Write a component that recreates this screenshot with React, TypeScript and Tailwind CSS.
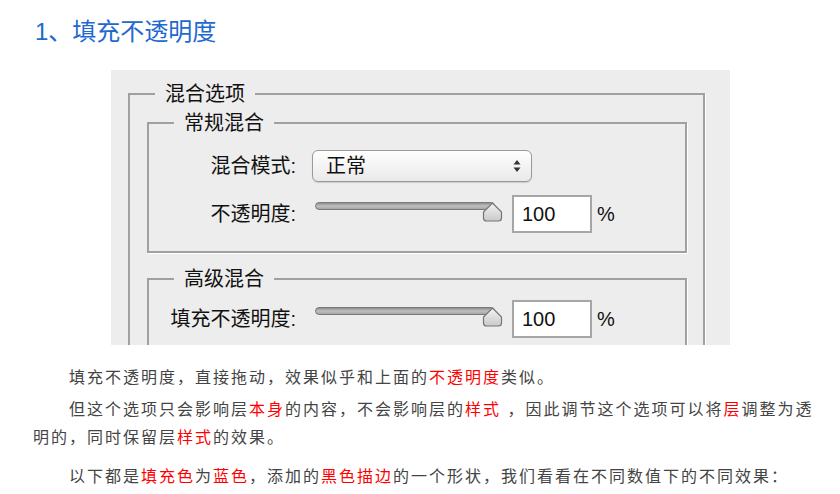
const cjk = '"Liberation Sans", "Noto Sans CJK SC", sans-serif';

function Slider() {
  return (
    <div className="relative w-[188px] h-[38px]">
      <div className="absolute left-0 top-[7px] w-[180px] h-[8px] rounded-full border border-[#7a7a7a] bg-gradient-to-b from-[#8e8e8e] via-[#c0c0c0] to-[#a4a4a4]" />
      <svg
        className="absolute left-[167px] top-[7px]"
        width="21"
        height="20"
        viewBox="0 0 21 20"
      >
        <defs>
          <linearGradient id="thumb" x1="0" y1="0" x2="0" y2="1">
            <stop offset="0" stopColor="#f4f4f4" />
            <stop offset="1" stopColor="#c9c9c9" />
          </linearGradient>
        </defs>
        <path
          d="M10.5 1 L19.5 10 L19.5 16 Q19.5 19 16.5 19 L4.5 19 Q1.5 19 1.5 16 L1.5 10 Z"
          fill="url(#thumb)"
          stroke="#777"
          strokeWidth="1.2"
        />
      </svg>
    </div>
  );
}

function PercentInput() {
  return (
    <div className="flex items-center gap-[5px]">
      <div className="w-[80px] h-[38px] bg-white border-2 border-[#a6a6a6] flex items-center pl-[8px] text-[20px] text-[#111]">
        100
      </div>
      <span className="text-[20px] text-[#111]">%</span>
    </div>
  );
}

function Legend({ children }: { children: React.ReactNode }) {
  return (
    <legend className="ml-[25px] px-[10px] text-[20px] leading-[26px] text-[#111]">
      {children}
    </legend>
  );
}

function Red({ children }: { children: React.ReactNode }) {
  return <span className="text-[#f00]">{children}</span>;
}

export default function App() {
  return (
    <div className="w-[840px] h-[494px] bg-white overflow-hidden" style={{ fontFamily: cjk }}>
      <h2 className="pt-[16px] pl-[35px] text-[24px] leading-[32px] text-[#2168cf] font-normal">
        1、填充不透明度
      </h2>

      <div className="mt-[22px] ml-[111px] w-[619px] h-[275px] bg-[#ededed] overflow-hidden pt-[11px]">
        <fieldset className="ml-[17px] w-[577px] border-2 border-[#a0a0a0] shadow-[1px_1px_0_#fff] px-0 pb-[20px] min-h-[300px]">
          <Legend>混合选项</Legend>

          <fieldset className="mt-[3px] ml-[17px] w-[540px] border-2 border-[#a0a0a0] shadow-[1px_1px_0_#fff] px-0 pt-[14px] pb-[18px]">
            <Legend>常规混合</Legend>
            <div className="flex items-center">
              <span className="w-[147px] text-right text-[20px] text-[#111]">混合模式:</span>
              <div className="ml-[16px] w-[220px] h-[32px] rounded-[6px] border border-[#9a9a9a] bg-gradient-to-b from-white to-[#e9e9e9] shadow-[0_1px_1px_rgba(0,0,0,0.15)] flex items-center justify-between pl-[13px] pr-[10px]">
                <span className="text-[20px] text-[#111]">正常</span>
                <svg width="8" height="14" viewBox="0 0 8 14">
                  <path d="M4 1 L7.5 5.5 L0.5 5.5 Z" fill="#333" />
                  <path d="M4 13 L7.5 8.5 L0.5 8.5 Z" fill="#333" />
                </svg>
              </div>
            </div>
            <div className="mt-[13px] flex items-center">
              <span className="w-[147px] text-right text-[20px] text-[#111]">不透明度:</span>
              <div className="ml-[19px]">
                <Slider />
              </div>
              <div className="ml-[9px]">
                <PercentInput />
              </div>
            </div>
          </fieldset>

          <fieldset className="mt-[13px] ml-[17px] w-[540px] border-2 border-[#a0a0a0] shadow-[1px_1px_0_#fff] px-0 pt-[8px] pb-[16px]">
            <Legend>高级混合</Legend>
            <div className="flex items-center">
              <span className="w-[147px] text-right text-[20px] text-[#111]">填充不透明度:</span>
              <div className="ml-[19px]">
                <Slider />
              </div>
              <div className="ml-[9px]">
                <PercentInput />
              </div>
            </div>
          </fieldset>
        </fieldset>
      </div>

      <div className="pl-[33px] w-[823px] text-[16px] leading-[28px] tracking-[2px] text-[#444]">
        <p className="mt-[19px] indent-[36px]">
          填充不透明度，直接拖动，效果似乎和上面的<Red>不透明度</Red>类似。
        </p>
        <p className="mt-[4px] indent-[36px]">
          <span>但这个选项只会影响层</span>
          <Red>本身</Red>
          <span>的内容，不会影响层的</span>
          <Red>样式</Red>
          <span> ，因此调节这个选项可以将</span>
          <Red>层</Red>
          <span>调整为透</span>
          <br />
          <span>明的，同时保留层</span>
          <Red>样式</Red>
          <span>的效果。</span>
        </p>
        <p className="mt-[11px] indent-[36px]">
          以下都是<Red>填充色</Red>为<Red>蓝色</Red>，添加的<Red>黑色描边</Red>的一个形状，我们看看在不同数值下的不同效果：
        </p>
      </div>
    </div>
  );
}
